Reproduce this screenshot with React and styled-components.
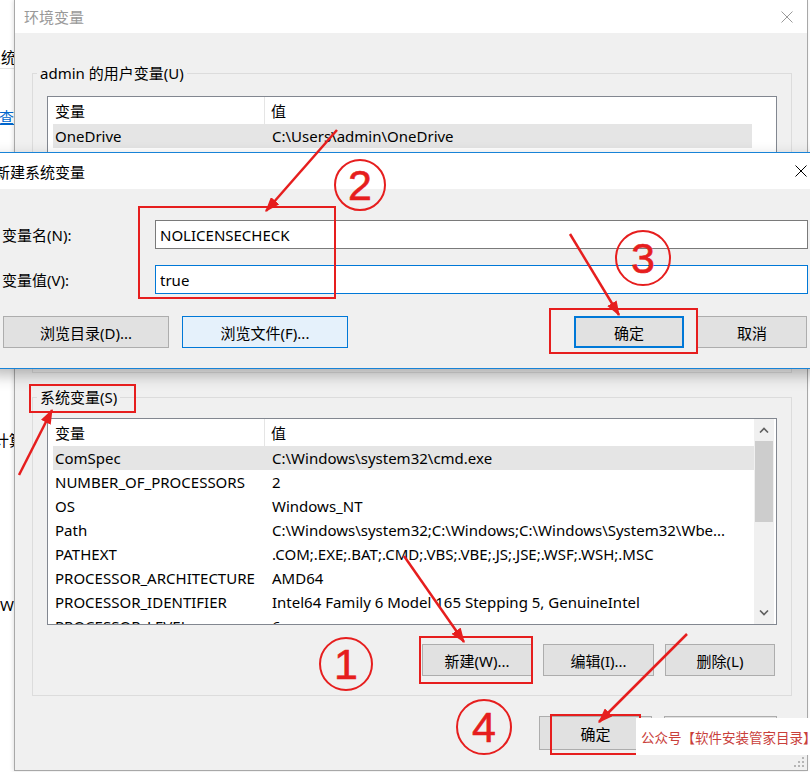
import React from 'react'
import styled, { createGlobalStyle } from 'styled-components'

const RED = '#e61e1e'

const GlobalStyle = createGlobalStyle`
  html, body { margin: 0; padding: 0; background: #fff; }
  body {
    font-family: "Noto Sans", "Noto Sans CJK SC", sans-serif;
    font-size: 15px;
    color: #000;
  }
`

const Desktop = styled.div`
  position: relative;
  width: 810px;
  height: 772px;
  overflow: hidden;
  background: #fff;
`

/* window behind, only its left edge shows */
const BackWindow = styled.div`
  position: absolute;
  left: 0;
  top: 0;
  width: 14px;
  height: 772px;
  overflow: hidden;
  background: #fff;
  display: flex;
  flex-direction: column;
`

const BackText = styled.div`
  margin-top: ${p => p.$gap}px;
  margin-left: ${p => p.$shift}px;
  white-space: nowrap;
  line-height: 20px;
  color: ${p => (p.$link ? '#0066cc' : '#000')};
  text-decoration: ${p => (p.$link ? 'underline' : 'none')};
`

const BackRule = styled.div`
  height: 1px;
  flex: none;
  margin-top: 1px;
  background: #e3e3e3;
`

const EnvDialog = styled.div`
  position: absolute;
  left: 14px;
  top: 0;
  width: 794px;
  height: 771px;
  box-sizing: border-box;
  border: 1px solid #a8a8a8;
  border-top: none;
  background: #f0f0f0;
  display: flex;
  flex-direction: column;
  box-shadow: -1px 0 4px rgba(0, 0, 0, 0.12);
`

const TitleBar = styled.div`
  height: ${p => p.$h}px;
  flex: none;
  background: #fff;
  display: flex;
  align-items: center;
  justify-content: space-between;
  padding: 0 ${p => p.$pr}px 0 ${p => p.$pl}px;
  color: ${p => (p.$active ? '#000' : '#999')};
  white-space: nowrap;
`

const EnvBody = styled.div`
  flex: 1;
  padding: 30px 15px 0 17px;
  display: flex;
  flex-direction: column;
`

const Group = styled.fieldset`
  margin: ${p => p.$mt}px 0 0 0;
  padding: 0;
  border: 1px solid #dcdcdc;
  min-width: 0;
`

const GroupLabel = styled.legend`
  padding: 0 3px;
  margin-left: 4px;
  line-height: 20px;
`

const GroupInner = styled.div`
  padding: ${p => p.$pt}px 14px ${p => p.$pb}px;
  display: flex;
  flex-direction: column;
`

const ListBox = styled.div`
  height: ${p => p.$height}px;
  box-sizing: border-box;
  border: 1px solid #828790;
  background: #fff;
  display: flex;
  overflow: hidden;
`

const ListTable = styled.div`
  flex: 1;
  min-width: 0;
  display: flex;
  flex-direction: column;
`

const HeaderRow = styled.div`
  display: grid;
  grid-template-columns: 217px 1fr;
  height: 27px;
  flex: none;
`

const HeaderCell = styled.div`
  padding-left: ${p => p.$pl}px;
  display: flex;
  align-items: center;
  border-right: ${p => (p.$divider ? '1px solid #e5e5e5' : 'none')};
`

const Row = styled.div`
  display: grid;
  grid-template-columns: 212px 1fr;
  height: 24px;
  flex: none;
  margin-left: 5px;
  align-items: center;
  white-space: nowrap;
  background: ${p => (p.$selected ? '#e5e5e5' : 'transparent')};
`

const Cell = styled.div`
  padding-left: ${p => p.$pl}px;
  overflow: hidden;
`

const ScrollGap = styled.div`
  width: 24px;
  flex: none;
`

const Scrollbar = styled.div`
  width: 20px;
  flex: none;
  margin-right: 2px;
  background: #f0f0f0;
  display: flex;
  flex-direction: column;
`

const ScrollArrow = styled.div`
  height: 22px;
  flex: none;
  display: flex;
  align-items: center;
  justify-content: center;
`

const Thumb = styled.div`
  height: 81px;
  flex: none;
  margin: 0 1px;
  background: #cdcdcd;
`

const Track = styled.div`
  flex: 1;
`

const ButtonRow = styled.div`
  display: flex;
  justify-content: ${p => p.$justify || 'flex-end'};
  gap: ${p => p.$gap}px;
  margin-top: ${p => p.$mt}px;
  padding-right: ${p => p.$pr || 0}px;
`

const ButtonGroup = styled.div`
  display: flex;
  gap: 13px;
  margin-left: ${p => p.$ml || 0}px;
  margin-right: ${p => p.$mr || 0}px;
`

const Button = styled.button`
  width: ${p => p.$w}px;
  height: ${p => p.$h || 32}px;
  box-sizing: border-box;
  padding: 0;
  border-radius: 0;
  font: inherit;
  color: #000;
  background: ${p => (p.$hover ? '#e5f1fb' : '#e1e1e1')};
  border: ${p =>
    p.$primary ? '2px solid #0078d7' : p.$hover ? '1px solid #0078d7' : '1px solid #adadad'};
`

const Grip = styled.svg`
  position: absolute;
  right: 2px;
  bottom: 2px;
`

const NewDialog = styled.div`
  position: absolute;
  left: -12px;
  top: 152px;
  width: 835px;
  height: 217px;
  box-sizing: border-box;
  border: 1px solid #1883d7;
  background: #f0f0f0;
  display: flex;
  flex-direction: column;
  box-shadow: 0 6px 14px rgba(0, 0, 0, 0.28);
`

const NewBody = styled.div`
  flex: 1;
  padding: 31px 14px 0 13px;
  display: flex;
  flex-direction: column;
`

const FieldRow = styled.div`
  display: grid;
  grid-template-columns: 153px 1fr;
  align-items: center;
  margin-top: ${p => p.$mt || 0}px;
`

const TextInput = styled.input`
  height: 29px;
  box-sizing: border-box;
  border: 1px solid ${p => (p.$focused ? '#0078d7' : '#7a7a7a')};
  background: #fff;
  padding: 0 4px;
  font: inherit;
  color: #000;
  outline: none;
`

/* annotations drawn over the screenshot */
const Overlay = styled.div`
  position: absolute;
  inset: 0;
  pointer-events: none;
`

const RedBox = styled.div`
  position: absolute;
  left: ${p => p.$x}px;
  top: ${p => p.$y}px;
  width: ${p => p.$w}px;
  height: ${p => p.$h}px;
  box-sizing: border-box;
  border: 2px solid ${RED};
`

const Circled = styled.div`
  position: absolute;
  left: ${p => p.$cx - p.$d / 2}px;
  top: ${p => p.$cy - p.$d / 2}px;
  width: ${p => p.$d}px;
  height: ${p => p.$d}px;
  box-sizing: border-box;
  border: 2px solid ${RED};
  border-radius: 50%;
  display: flex;
  align-items: center;
  justify-content: center;
  color: ${RED};
  font-family: "Liberation Sans", "Noto Sans", sans-serif;
  font-size: 43px;
  line-height: 1;
  -webkit-text-stroke: 0.6px ${RED};
`

const Arrows = styled.svg`
  position: absolute;
  left: 0;
  top: 0;
`

const Watermark = styled.div`
  position: absolute;
  left: 636px;
  top: 718px;
  width: 174px;
  height: 37px;
  background: #fff;
  display: flex;
  align-items: center;
  padding-left: 5px;
  box-sizing: border-box;
  font-size: 13.5px;
  color: #c9403b;
  white-space: nowrap;
`

const Close = ({ color }) => (
  <svg width="12" height="12" viewBox="0 0 12 12">
    <path d="M0.5 0.5 L11.5 11.5 M11.5 0.5 L0.5 11.5" stroke={color} strokeWidth="1" fill="none" />
  </svg>
)

const Chevron = ({ up }) => (
  <svg width="10" height="6" viewBox="0 0 10 6">
    <polyline
      points={up ? '1,5.5 5,1.5 9,5.5' : '1,0.5 5,4.5 9,0.5'}
      stroke="#606060"
      strokeWidth="1.6"
      fill="none"
    />
  </svg>
)

const userVars = [
  ['OneDrive', 'C:\\Users\\admin\\OneDrive'],
  ['Path', 'C:\\Users\\admin\\AppData\\Local\\Microsoft\\WindowsApps;'],
  ['TEMP', 'C:\\Users\\admin\\AppData\\Local\\Temp'],
  ['TMP', 'C:\\Users\\admin\\AppData\\Local\\Temp'],
]

const systemVars = [
  ['ComSpec', 'C:\\Windows\\system32\\cmd.exe'],
  ['NUMBER_OF_PROCESSORS', '2'],
  ['OS', 'Windows_NT'],
  ['Path', 'C:\\Windows\\system32;C:\\Windows;C:\\Windows\\System32\\Wbe...'],
  ['PATHEXT', '.COM;.EXE;.BAT;.CMD;.VBS;.VBE;.JS;.JSE;.WSF;.WSH;.MSC'],
  ['PROCESSOR_ARCHITECTURE', 'AMD64'],
  ['PROCESSOR_IDENTIFIER', 'Intel64 Family 6 Model 165 Stepping 5, GenuineIntel'],
  ['PROCESSOR_LEVEL', '6'],
]

const VarList = ({ rows, height, scroll }) => (
  <ListBox $height={height}>
    <ListTable>
      <HeaderRow>
        <HeaderCell $pl={7} $divider>变量</HeaderCell>
        <HeaderCell $pl={6}>值</HeaderCell>
      </HeaderRow>
      {rows.map(([name, value], i) => (
        <Row key={name} $selected={i === 0}>
          <Cell $pl={2}>{name}</Cell>
          <Cell $pl={7}>{value}</Cell>
        </Row>
      ))}
    </ListTable>
    {scroll ? (
      <Scrollbar>
        <ScrollArrow><Chevron up /></ScrollArrow>
        <Thumb />
        <Track />
        <ScrollArrow><Chevron /></ScrollArrow>
      </Scrollbar>
    ) : (
      <ScrollGap />
    )}
  </ListBox>
)

const ListButtons = () => (
  <ButtonRow $gap={11} $mt={19} $pr={2}>
    <Button $w={110}>新建(W)...</Button>
    <Button $w={111}>编辑(I)...</Button>
    <Button $w={110}>删除(L)</Button>
  </ButtonRow>
)

const arrows = [
  [337, 130, 266, 211],
  [570, 234, 619, 315],
  [19, 475, 52, 410],
  [404, 556, 464, 642],
  [687, 634, 599, 722],
]

export default function App() {
  return (
    <Desktop>
      <GlobalStyle />

      <BackWindow>
        <BackText $gap={47} $shift={-14}>系统属性</BackText>
        <BackRule />
        <BackText $gap={38} $shift={-1} $link>查看</BackText>
        <BackText $gap={303} $shift={-6}>计算机</BackText>
        <BackText $gap={145} $shift={0}>Windows</BackText>
      </BackWindow>

      <EnvDialog>
        <TitleBar $h={33} $pl={9} $pr={14}>
          <span>环境变量</span>
          <Close color="#9a9a9a" />
        </TitleBar>
        <EnvBody>
          <Group $mt={0}>
            <GroupLabel>admin 的用户变量(U)</GroupLabel>
            <GroupInner $pt={13} $pb={20}>
              <VarList rows={userVars} height={205} />
              <ListButtons />
            </GroupInner>
          </Group>
          <Group $mt={14}>
            <GroupLabel>系统变量(S)</GroupLabel>
            <GroupInner $pt={11} $pb={19}>
              <VarList rows={systemVars} height={207} scroll />
              <ListButtons />
            </GroupInner>
          </Group>
          <ButtonRow $gap={12} $mt={20} $pr={15}>
            <Button $w={113} $h={34}>确定</Button>
            <Button $w={113} $h={34}>取消</Button>
          </ButtonRow>
        </EnvBody>
        <Grip width="12" height="12" viewBox="0 0 12 12">
          {[[10, 2], [10, 6], [6, 6], [10, 10], [6, 10], [2, 10]].map(([x, y]) => (
            <rect key={`${x}-${y}`} x={x - 1} y={y - 1} width="2" height="2" fill="#b5b5b5" />
          ))}
        </Grip>
      </EnvDialog>

      <NewDialog>
        <TitleBar $h={36} $pl={6} $pr={15} $active>
          <span>新建系统变量</span>
          <Close color="#000" />
        </TitleBar>
        <NewBody>
          <FieldRow>
            <span>变量名(N):</span>
            <TextInput value="NOLICENSECHECK" readOnly />
          </FieldRow>
          <FieldRow $mt={16}>
            <span>变量值(V):</span>
            <TextInput value="true" readOnly $focused />
          </FieldRow>
          <ButtonRow $justify="space-between" $gap={0} $mt={22}>
            <ButtonGroup $ml={1}>
              <Button $w={166}>浏览目录(D)...</Button>
              <Button $w={166} $hover>浏览文件(F)...</Button>
            </ButtonGroup>
            <ButtonGroup $mr={1}>
              <Button $w={110} $primary>确定</Button>
              <Button $w={110}>取消</Button>
            </ButtonGroup>
          </ButtonRow>
        </NewBody>
      </NewDialog>

      <Overlay>
        <RedBox $x={138} $y={206} $w={198} $h={93} />
        <RedBox $x={549} $y={308} $w={149} $h={46} />
        <RedBox $x={29} $y={384} $w={107} $h={29} />
        <RedBox $x={419} $y={636} $w={114} $h={48} />
        <RedBox $x={550} $y={714} $w={91} $h={41} />

        <Circled $cx={360} $cy={185} $d={52}>2</Circled>
        <Circled $cx={643} $cy={258} $d={56}>3</Circled>
        <Circled $cx={346} $cy={664} $d={54}>1</Circled>
        <Circled $cx={484} $cy={727} $d={56}>4</Circled>

        <Arrows width="810" height="772" viewBox="0 0 810 772">
          <defs>
            <marker id="head" markerWidth="6" markerHeight="4.4" refX="5.5" refY="2.2" orient="auto" markerUnits="strokeWidth">
              <path d="M0,0 L6,2.2 L0,4.4 Z" fill={RED} />
            </marker>
          </defs>
          {arrows.map(([x1, y1, x2, y2]) => (
            <line
              key={`${x1}-${y1}`}
              x1={x1}
              y1={y1}
              x2={x2}
              y2={y2}
              stroke={RED}
              strokeWidth="2.5"
              markerEnd="url(#head)"
            />
          ))}
        </Arrows>

        <Watermark>公众号【软件安装管家目录】</Watermark>
      </Overlay>
    </Desktop>
  )
}
